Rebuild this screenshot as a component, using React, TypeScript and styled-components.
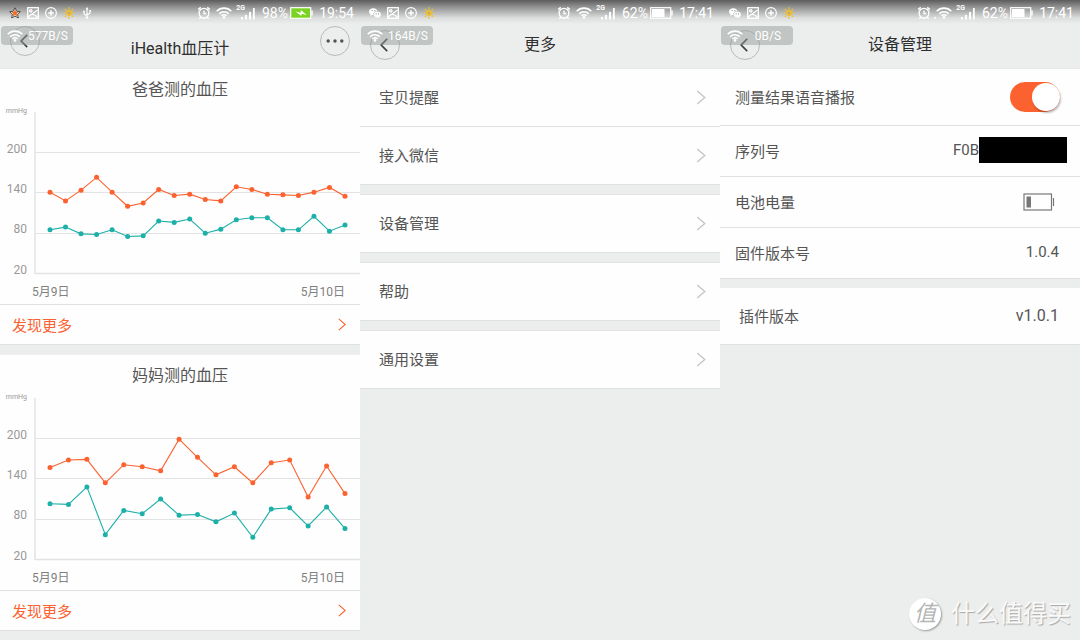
import React from "react";
import styled, { createGlobalStyle } from "styled-components";

const c = {
  page: "#eceeed",
  card: "#fefefe",
  line: "#e0e2e1",
  grid: "#e2e3e3",
  text: "#555555",
  title: "#2e2e2e",
  muted: "#999999",
  orange: "#fc6230",
  teal: "#1cb0a8",
};

const GlobalStyle = createGlobalStyle`
  *, *::before, *::after { box-sizing: border-box; }
  body {
    margin: 0;
    background: ${c.page};
    color: ${c.text};
    font-family: Roboto, "Noto Sans CJK SC", sans-serif;
  }
  button { font: inherit; color: inherit; cursor: pointer; }
`;

const Page = styled.div`
  position: relative;
  display: grid;
  grid-template-columns: repeat(3, minmax(0, 1fr));
  min-height: 100vh;
`;

const Screen = styled.section`
  position: relative;
  display: flex;
  flex-direction: column;
`;

/* ---------- status bar ---------- */

const StatusBar = styled.div`
  display: flex;
  align-items: center;
  justify-content: space-between;
  height: 25px;
  padding: 0 6px 0 9px;
  color: #ffffff;
  background: linear-gradient(#5c5c5c 0, #8b8b8b 6px, #b3b4b4 12px, #dcdddd 18px, ${c.page} 24px);
  svg { display: block; flex: none; }
`;

const StatusLeft = styled.div`
  display: flex;
  align-items: center;
  gap: 6px;
`;

const StatusRight = styled.div`
  display: flex;
  align-items: center;
  font-size: 14px;
  line-height: 24px;
`;

const Percent = styled.span`
  margin: 0 2px 0 7px;
`;

const Clock = styled.time`
  width: 36px;
  margin-left: 5px;
  text-align: right;
  white-space: nowrap;
`;

const StarIcon = () => (
  <svg width="12" height="12" viewBox="0 0 12 12">
    <path d="M6 .8l1.6 3.4 3.7.5-2.7 2.5.7 3.7L6 9.1l-3.3 1.8.7-3.7L.7 4.7l3.7-.5z" fill="#fff" stroke="#4a4a4a" strokeWidth="1" />
    <path d="M6 2.600l1 2.200 2.400.4-1.700 1.600.4 2.400L6 8.100l-2.100 1.100.4-2.400-1.700-1.600 2.400-.4z" fill="#f26a1b" />
  </svg>
);

const WeChatIcon = () => (
  <svg width="12" height="12" viewBox="0.5 0 13 12">
    <path d="M5.300.8C2.600.8.500 2.400.5 4.500c0 1.200.7 2.200 1.700 2.900L1.800 9l1.800-.9c.5.1 1 .2 1.500.2C4.700 5.800 6.800 3.900 9.700 3.800 9.100 2 7.400.8 5.300.8z" fill="#fff" />
    <path d="M9.500 4.500c-2.200 0-3.900 1.400-3.900 3.200s1.700 3.200 3.900 3.200c.5 0 .9-.1 1.300-.2l1.500.8-.4-1.300c.9-.6 1.500-1.500 1.500-2.500 0-1.800-1.700-3.200-3.900-3.200z" fill="#fff" />
    <g fill="#8f8f8f">
      <circle cx="3.800" cy="3.400" r=".7" />
      <circle cx="6.800" cy="3.400" r=".7" />
      <circle cx="8.300" cy="7" r=".6" />
      <circle cx="10.800" cy="7" r=".6" />
    </g>
  </svg>
);

const PictureIcon = () => (
  <svg width="12" height="12" viewBox="0 0 12 12" fill="none" stroke="#fff" strokeWidth="1.300">
    <rect x=".7" y=".7" width="10.600" height="10.600" />
    <circle cx="3.800" cy="3.800" r="1.200" />
    <path d="M1 10L10.500 3M5 7.500c1.500-.6 3 .5 5.500 2.500" />
  </svg>
);

const PlusCircleIcon = () => (
  <svg width="12" height="12" viewBox="0 0 12 12" fill="none" stroke="#fff">
    <circle cx="6" cy="6" r="5.400" strokeWidth="1.100" />
    <path d="M6 3.200v5.600M3.200 6h5.600" strokeWidth="1.500" />
  </svg>
);

const SunIcon = () => (
  <svg width="12" height="12" viewBox="0 0 12 12" fill="none" stroke="#f8c21c" strokeWidth="1.200">
    <circle cx="6" cy="6" r="2.300" fill="#cfae5a" />
    <path d="M6 .3v1.900M6 9.800v1.900M.3 6h1.900M9.800 6h1.900M2 2l1.300 1.300M8.700 8.700L10 10M2 10l1.300-1.300M8.700 3.300L10 2" />
  </svg>
);

const UsbIcon = () => (
  <svg width="12" height="12" viewBox="0 0 12 12" fill="none" stroke="#fff" strokeWidth="1.100">
    <path d="M6 2v8M6 8.500C3.500 8 2.800 7 2.800 5M6 7.500c2.500-.3 3.200-1.200 3.200-3" />
    <path d="M6 0l1.500 2.400h-3zM4.800 9.800h2.400v1.700H4.800zM2 3.700h1.700v1.600H2zM8.400 3h1.600v1.700H8.400z" fill="#fff" stroke="none" />
  </svg>
);

const AlarmIcon = () => (
  <svg width="14" height="14" viewBox="0 0 14 14" fill="none" stroke="#fff" strokeWidth="1.400">
    <circle cx="7" cy="7.300" r="4.900" />
    <path d="M7 4.500v3h2.300M1.200 3.600l2.500-2.200M12.800 3.600l-2.500-2.200M3.600 11.200l-1.200 1.500M10.400 11.200l1.200 1.500" />
  </svg>
);

const WifiIcon = () => (
  <svg width="16" height="12" viewBox="0 0 16 12" fill="none" stroke="#fff" strokeWidth="1.600">
    <path d="M.7 4.300C4.700.1 11.300.1 15.300 4.300M3.200 6.900c2.700-2.800 6.900-2.800 9.600 0" />
    <path d="M5.300 9c1.600-1.600 3.800-1.600 5.400 0" />
    <circle cx="8" cy="10.400" r="1.300" fill="#fff" stroke="none" />
  </svg>
);

const Network = styled.span`
  display: flex;
  align-items: flex-start;
  height: 16px;
  margin-left: 4px;
  font-size: 7px;
  line-height: 7px;
  font-weight: 700;
`;

const SignalIcon = () => (
  <svg width="14" height="13" viewBox="0 0 14 13" fill="#fff">
    <path d="M0 10h2v2.500H0zM4 8h2v4.500H4zM8 5h2v7.500H8zM12 1h1.700v11.500H12z" />
  </svg>
);

const SignalBars = styled.span`
  margin: 2px 0 0 -4px;
`;

const WifiSlot = styled.span`
  display: flex;
  align-items: flex-end;
  width: 18px;
  justify-content: flex-end;
  margin-left: 3px;
`;

const StatusBattery = ({ charging }: { charging?: boolean }) => (
  <svg width="23" height="12" viewBox="0 0 23 12">
    <rect x=".7" y=".7" width="20" height="10.600" fill={charging ? "#7bd321" : "none"} stroke="#fff" strokeWidth="1.200" />
    <rect x="21.300" y="3.500" width="1.400" height="5" fill="#fff" />
    {charging ? (
      <path d="M5.500 4.600l5.200 1.200.2-2.700 5.700 4.800-5-1.200-.2 2.300z" fill="#fff" />
    ) : (
      <rect x="2" y="2" width="12.500" height="8" fill="#fff" />
    )}
  </svg>
);

type StatusProps = { percent: string; time: string; usb?: boolean; dot?: boolean };

const Status = ({ percent, time, usb, dot }: StatusProps) => (
  <StatusBar>
    <StatusLeft>
      {usb ? <StarIcon /> : <WeChatIcon />}
      <PictureIcon />
      <PlusCircleIcon />
      <SunIcon />
      {usb && <UsbIcon />}
    </StatusLeft>
    <StatusRight>
      <AlarmIcon />
      <WifiSlot>
        {dot && (
          <svg width="2" height="2" viewBox="0 0 2 2"><circle cx="1" cy="1" r="1" fill="#fff" /></svg>
        )}
        <WifiIcon />
      </WifiSlot>
      <Network>
        2G
        <SignalBars><SignalIcon /></SignalBars>
      </Network>
      <Percent>{percent}</Percent>
      <StatusBattery charging={usb} />
      <Clock>{time}</Clock>
    </StatusRight>
  </StatusBar>
);

/* ---------- header ---------- */

const HeaderBar = styled.header<{ $low?: boolean }>`
  display: grid;
  grid-template-columns: 30px 1fr 30px;
  align-items: ${(p) => (p.$low ? "start" : "center")};
  height: 44px;
  padding: ${(p) => (p.$low ? "1px 10px 0" : "0 10px 4px")};
  border-bottom: 1px solid #e6e8e7;
`;

const Title = styled.h1<{ $low?: boolean }>`
  margin: 0;
  font-size: 16px;
  line-height: ${(p) => (p.$low ? "46px" : "38px")};
  font-weight: 400;
  color: ${c.title};
  text-align: center;
`;

const RoundButton = styled.button`
  display: flex;
  align-items: center;
  justify-content: center;
  width: 30px;
  height: 30px;
  padding: 0;
  border: 1px solid #b9bbba;
  border-radius: 50%;
  background: transparent;
`;

const BackButton = styled(RoundButton)`
  padding-right: 3px;
`;

const SpeedBadge = styled.div`
  position: absolute;
  top: 26px;
  left: 1px;
  z-index: 1;
  display: flex;
  align-items: center;
  width: 72px;
  height: 19px;
  padding: 0 4px 0 6px;
  border-radius: 4px;
  background: rgba(150, 155, 154, 0.5);
  color: #ffffff;
  font-size: 12px;
  pointer-events: none;
`;

const SpeedValue = styled.span`
  flex: 1;
  padding-left: 4px;
  text-align: center;
`;

const Back = () => (
  <BackButton aria-label="返回">
    <svg width="8" height="14" viewBox="0 0 8 14" fill="none" stroke="#404040" strokeWidth="1.700">
      <path d="M7.200 .8L1.200 7l6 6.200" />
    </svg>
  </BackButton>
);

const More = () => (
  <RoundButton aria-label="更多选项">
    <svg width="18" height="4" viewBox="0 0 18 4" fill="#505050">
      <circle cx="2.200" cy="2" r="1.700" />
      <circle cx="9" cy="2" r="1.700" />
      <circle cx="15.800" cy="2" r="1.700" />
    </svg>
  </RoundButton>
);

const Header = ({ title, speed, menu }: { title: string; speed: string; menu?: boolean }) => (
  <>
    <SpeedBadge>
      <WifiIcon />
      <SpeedValue>{speed}</SpeedValue>
    </SpeedBadge>
    <HeaderBar $low={menu}>
      <Back />
      <Title $low={menu}>{title}</Title>
      {menu && <More />}
    </HeaderBar>
  </>
);

/* ---------- blood pressure cards ---------- */

const Stack = styled.div<{ $gap: number }>`
  display: flex;
  flex-direction: column;
  gap: ${(p) => p.$gap}px;
`;

const Card = styled.article`
  background: ${c.card};
  border-bottom: 1px solid ${c.line};
`;

const CardTitle = styled.h2`
  margin: 0;
  height: 40px;
  font-size: 16px;
  line-height: 42px;
  font-weight: 400;
  text-align: center;
`;

const ChartSvg = styled.svg`
  display: block;
  width: 100%;
  height: auto;
  overflow: visible;
  font-size: 12px;
`;

const Dates = styled.div`
  display: flex;
  justify-content: space-between;
  height: 24px;
  padding: 0 15px 0 32px;
  font-size: 12px;
  line-height: 24px;
  color: #808080;
`;

const MoreLink = styled.a`
  display: flex;
  align-items: center;
  justify-content: space-between;
  height: 40px;
  padding: 0 14px 0 12px;
  border-top: 1px solid ${c.line};
  color: ${c.orange};
  font-size: 15px;
  text-decoration: none;
`;

const Chevron = ({ small }: { small?: boolean }) => (
  <svg width={small ? 8 : 10} height={small ? 13 : 15} viewBox="0 0 10 16" fill="none" stroke={small ? c.orange : "#c4c4c4"} strokeWidth="1.400">
    <path d="M1 1l8 7-8 7" />
  </svg>
);

const toY = (value: number) => 43.5 + ((200 - value) * 121) / 180;

const Series = ({ values, color }: { values: number[]; color: string }) => {
  const points = values.map((v, i) => [50 + (i * 295) / (values.length - 1), toY(v)]);
  return (
    <g>
      <polyline points={points.map((p) => p.join(",")).join(" ")} fill="none" stroke={color} strokeWidth="1.100" />
      {points.map(([x, y]) => (
        <circle key={x} cx={x} cy={y} r="2.500" fill={color} />
      ))}
    </g>
  );
};

type Reading = { title: string; systolic: number[]; diastolic: number[] };

const PressureCard = ({ title, systolic, diastolic }: Reading) => (
  <Card>
    <CardTitle>{title}</CardTitle>
    <ChartSvg viewBox="0 0 360 171" role="img" aria-label={title}>
      <text x="27" y="4" fontSize="7" textAnchor="end" fill={c.muted}>mmHg</text>
      {[200, 140, 80, 20].map((v) => (
        <g key={v}>
          <path d={`M35 ${Math.round(toY(v) - 0.5) + 0.5}H360`} stroke={c.grid} strokeWidth={v === 20 ? 1.5 : 1} />
          <text x="27" y={Math.round(toY(v))} textAnchor="end" fill={c.muted}>{v}</text>
        </g>
      ))}
      <path d="M35 3V165" stroke={c.grid} strokeWidth="1.500" />
      <Series values={systolic} color={c.orange} />
      <Series values={diastolic} color={c.teal} />
    </ChartSvg>
    <Dates>
      <span>5月9日</span>
      <span>5月10日</span>
    </Dates>
    <MoreLink href="#more">
      发现更多
      <Chevron small />
    </MoreLink>
  </Card>
);

const readings: Reading[] = [
  {
    title: "爸爸测的血压",
    systolic: [141, 128, 144, 163, 141, 120, 125, 145, 136, 138, 130, 128, 149, 145, 138, 137, 136, 141, 148, 135],
    diastolic: [85, 89, 79, 78, 85, 75, 76, 98, 96, 101, 80, 86, 100, 103, 103, 85, 85, 105, 83, 92],
  },
  {
    title: "妈妈测的血压",
    systolic: [157, 168, 169, 134, 161, 158, 152, 199, 172, 146, 158, 134, 164, 168, 113, 159, 118],
    diastolic: [103, 102, 128, 57, 93, 88, 110, 86, 87, 76, 89, 53, 95, 97, 70, 98, 66],
  },
];

/* ---------- menu ---------- */

const MenuGroup = styled.nav`
  display: flex;
  flex-direction: column;
  border-bottom: 1px solid ${c.line};
  background: ${c.card};
  & + & { border-top: 1px solid ${c.line}; }
`;

const MenuItem = styled.a`
  display: flex;
  align-items: center;
  justify-content: space-between;
  height: 57px;
  padding: 0 14px 0 19px;
  font-size: 15px;
  color: ${c.text};
  text-decoration: none;
  & + & {
    height: 58px;
    border-top: 1px solid ${c.line};
  }
`;

const Label = styled.span`
  padding-bottom: 2px;
`;

const menu = [["宝贝提醒", "接入微信"], ["设备管理"], ["帮助"], ["通用设置"]];

/* ---------- device details ---------- */

const Panel = styled.div`
  background: ${c.card};
`;

const Row = styled.div<{ $tall?: boolean; $left?: number; $right?: number }>`
  display: flex;
  align-items: center;
  justify-content: space-between;
  height: ${(p) => (p.$tall ? 57 : 51)}px;
  padding: 0 ${(p) => p.$right ?? 21}px 0 ${(p) => p.$left ?? 15}px;
  border-bottom: 1px solid ${c.line};
  font-size: 15px;
`;

const Value = styled.span<{ $size: number }>`
  font-size: ${(p) => p.$size}px;
  padding-bottom: 2px;
`;

const Serial = styled.span`
  display: flex;
  align-items: center;
  padding-bottom: 2px;
`;

const Redacted = styled.span`
  width: 88px;
  height: 26px;
  background: #000000;
`;

const Toggle = styled.input`
  appearance: none;
  display: flex;
  align-items: center;
  width: 50px;
  height: 30px;
  margin: 0;
  padding: 0 1px;
  border-radius: 15px;
  background: #cccccc;
  cursor: pointer;
  &::before {
    content: "";
    width: 28px;
    height: 28px;
    border-radius: 50%;
    background: #ffffff;
    box-shadow: 1px 2px 2px rgba(0, 0, 0, 0.25);
  }
  &:checked {
    justify-content: flex-end;
    padding-right: 0;
    background: ${c.orange};
  }
`;

const DeviceBattery = () => (
  <svg width="32" height="18" viewBox="0 0 32 18">
    <rect x="1" y="1" width="27.500" height="16" fill="none" stroke="#777" strokeWidth="1.200" />
    <rect x="3.500" y="3.500" width="4.500" height="11" fill="#777" />
    <path d="M30.500 5v8" stroke="#777" strokeWidth="1.200" />
  </svg>
);

/* ---------- watermark ---------- */

const Watermark = styled.div`
  position: absolute;
  right: 9px;
  bottom: 9px;
  display: flex;
  align-items: center;
  gap: 10px;
  color: #fafafa;
  font-size: 24px;
  line-height: 34px;
  text-shadow: 1px 1px 1px rgba(0, 0, 0, 0.3);
`;

const Seal = styled.span`
  display: flex;
  align-items: center;
  justify-content: center;
  width: 32px;
  height: 32px;
  border-radius: 50%;
  background: #ffffff;
  box-shadow: 1px 1px 2px rgba(0, 0, 0, 0.35);
  color: #b4b5b5;
  font-size: 22px;
  text-shadow: none;
  font-style: italic;
`;

export default function App() {
  return (
    <>
      <GlobalStyle />
      <Page>
        <Screen>
          <Status percent="98%" time="19:54" usb />
          <Header title="iHealth血压计" speed="577B/S" menu />
          <Stack $gap={10}>
            {readings.map((r) => (
              <PressureCard key={r.title} {...r} />
            ))}
          </Stack>
        </Screen>

        <Screen>
          <Status percent="62%" time="17:41" />
          <Header title="更多" speed="164B/S" />
          <Stack $gap={9}>
            {menu.map((group) => (
              <MenuGroup key={group[0]} aria-label={group[0]}>
                {group.map((label) => (
                  <MenuItem key={label} href="#item">
                    <Label>{label}</Label>
                    <Chevron />
                  </MenuItem>
                ))}
              </MenuGroup>
            ))}
          </Stack>
        </Screen>

        <Screen>
          <Status percent="62%" time="17:41" dot />
          <Header title="设备管理" speed="0B/S" />
          <Stack $gap={9}>
            <Panel>
              <Row $tall $right={20}>
                <Label as="label" htmlFor="voice">测量结果语音播报</Label>
                <Toggle id="voice" type="checkbox" role="switch" defaultChecked />
              </Row>
              <Row $right={13}>
                <Label>序列号</Label>
                <Serial>
                  F0B
                  <Redacted />
                </Serial>
              </Row>
              <Row $right={25}>
                <Label>电池电量</Label>
                <DeviceBattery />
              </Row>
              <Row>
                <Label>固件版本号</Label>
                <Value $size={15}>1.0.4</Value>
              </Row>
            </Panel>
            <Panel>
              <Row $tall $left={19}>
                <Label>插件版本</Label>
                <Value $size={16}>v1.0.1</Value>
              </Row>
            </Panel>
          </Stack>
        </Screen>

        <Watermark>
          <Seal>值</Seal>
          <span>什么值得买</span>
        </Watermark>
      </Page>
    </>
  );
}
